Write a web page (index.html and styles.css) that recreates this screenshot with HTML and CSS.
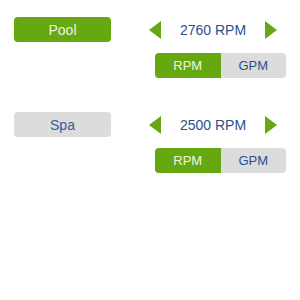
FILE: index.html
```html
<!DOCTYPE html>
<html lang="en">
<head>
    <meta charset="UTF-8">
    <meta name="viewport" content="width=device-width, initial-scale=1.0">
    <title>Pump Speed</title>
    <link rel="stylesheet" href="styles.css">
</head>
<body>
    <div class="zone">
        <button class="zone-btn active">Pool</button>
        <div class="controls">
            <div class="stepper">
                <span class="arrow left"></span>
                <span class="value">2760 RPM</span>
                <span class="arrow right"></span>
            </div>
            <div class="toggle">
                <span class="opt on">RPM</span>
                <span class="opt">GPM</span>
            </div>
        </div>
    </div>

    <div class="zone">
        <button class="zone-btn">Spa</button>
        <div class="controls">
            <div class="stepper">
                <span class="arrow left"></span>
                <span class="value">2500 RPM</span>
                <span class="arrow right"></span>
            </div>
            <div class="toggle">
                <span class="opt on">RPM</span>
                <span class="opt">GPM</span>
            </div>
        </div>
    </div>
</body>
</html>
```

FILE: styles.css
```css
body {
    margin: 0;
    padding: 17px 14px;
    font-family: "Liberation Sans", Arial, sans-serif;
    background: #fff;
}
.zone {
    display: flex;
    align-items: flex-start;
    margin-bottom: 34px;
}
.zone-btn {
    width: 97px;
    height: 25px;
    border: none;
    border-radius: 4px;
    background-color: #dcdcdc;
    color: #3a5a96;
    font-family: inherit;
    font-size: 14px;
    padding: 0;
}
.zone-btn.active {
    background-color: #66a80f;
    color: #eef6e2;
}
.controls {
    margin-left: 38px;
}
.stepper {
    display: flex;
    align-items: center;
    width: 128px;
    height: 22px;
    margin-top: 2px;
}
.arrow {
    width: 0;
    height: 0;
    border-top: 9px solid transparent;
    border-bottom: 9px solid transparent;
}
.arrow.left {
    border-right: 12px solid #66a80f;
}
.arrow.right {
    border-left: 12px solid #66a80f;
}
.value {
    flex: 1;
    text-align: center;
    font-size: 14px;
    color: #2d4f8e;
}
.toggle {
    display: flex;
    width: 131px;
    height: 25px;
    margin-top: 12px;
    margin-left: 6px;
    border-radius: 4px;
    overflow: hidden;
    background-color: #dcdcdc;
}
.opt {
    flex: 1;
    display: flex;
    align-items: center;
    justify-content: center;
    font-size: 13px;
    color: #2d4f8e;
}
.opt.on {
    background-color: #66a80f;
    color: #eef6e2;
}
```
